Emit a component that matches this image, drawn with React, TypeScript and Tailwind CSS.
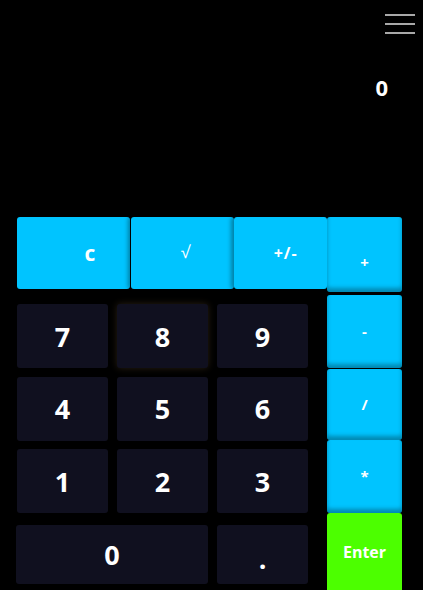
import React from 'react';

const digitKey =
  "flex items-center justify-center rounded-[3px] bg-[#10101f] text-white text-[27px] font-bold leading-none";
const opKey =
  "flex items-center justify-center rounded-[3px] bg-[#00c4ff] text-white font-bold leading-none shadow-[inset_0_-4px_4px_rgba(0,0,0,0.3)]";

export default function App() {
  return (
    <div className="h-[590px] w-full overflow-hidden bg-black font-['Open_Sans',sans-serif]">
      <div className="flex h-[217px] flex-col">
        <div className="flex justify-end pr-[8px] pt-[14px]">
          <div className="flex w-[30px] flex-col gap-[7px]">
            <span className="block h-[2px] w-full bg-[#a8a8a8]" />
            <span className="block h-[2px] w-full bg-[#a8a8a8]" />
            <span className="block h-[2px] w-full bg-[#a8a8a8]" />
          </div>
        </div>
        <div className="mt-[42px] flex justify-end pr-[35px] text-[22px] font-bold leading-none text-white">
          0
        </div>
      </div>

      <div className="flex pl-[17px]">
        <div className="w-[310px]">
          <div className="flex h-[72px] gap-[1px]">
            <button className="flex w-[113px] items-center justify-center rounded-[3px] bg-[#00c4ff] pl-[33px] text-[21px] font-bold leading-none text-white">
              c
            </button>
            <button className="flex w-[104px] items-center justify-center rounded-[3px] bg-[#00c4ff] pb-[3px] pl-[6px] text-[17px] leading-none text-white shadow-[-3px_0_4px_rgba(0,0,0,0.35)]">
              √
            </button>
            <button className="-ml-[1px] flex w-[93px] items-center justify-center rounded-[3px] bg-[#00c4ff] pl-[10px] text-[16px] font-bold leading-none tracking-[1px] text-white shadow-[-3px_0_4px_rgba(0,0,0,0.35)]">
              +/-
            </button>
          </div>

          <div className="mt-[15px] grid grid-cols-[91px_91px_91px] gap-x-[9px] gap-y-[8.5px]">
            {['7', '8', '9', '4', '5', '6', '1', '2', '3'].map((d) => (
              <button
                key={d}
                className={
                  digitKey +
                  ' h-[64px]' +
                  (d === '8' ? ' shadow-[0_0_7px_rgba(90,70,40,0.45)]' : '')
                }
              >
                {d}
              </button>
            ))}
          </div>

          <div className="mt-[12px] flex gap-[9px]">
            <button className={digitKey + ' -ml-[1px] h-[59px] w-[192px]'}>0</button>
            <button className={digitKey + ' h-[59px] w-[91px] pt-[8px] text-[22px]'}>.</button>
          </div>
        </div>

        <div className="flex w-[75px] flex-col">
          <button className={opKey + ' h-[75px] pt-[15px] text-[15px]'}>+</button>
          <button className={opKey + ' mt-[3px] h-[73px] text-[15px]'}>-</button>
          <button className={opKey + ' mt-[1px] h-[71px] text-[15px]'}>/</button>
          <button className={opKey + ' h-[73px] text-[15px]'}>*</button>
          <button className="flex h-[80px] items-center justify-center rounded-[3px] bg-[#4cff00] pb-[2px] text-[16px] font-bold leading-none text-white">
            Enter
          </button>
        </div>
      </div>
    </div>
  );
}
